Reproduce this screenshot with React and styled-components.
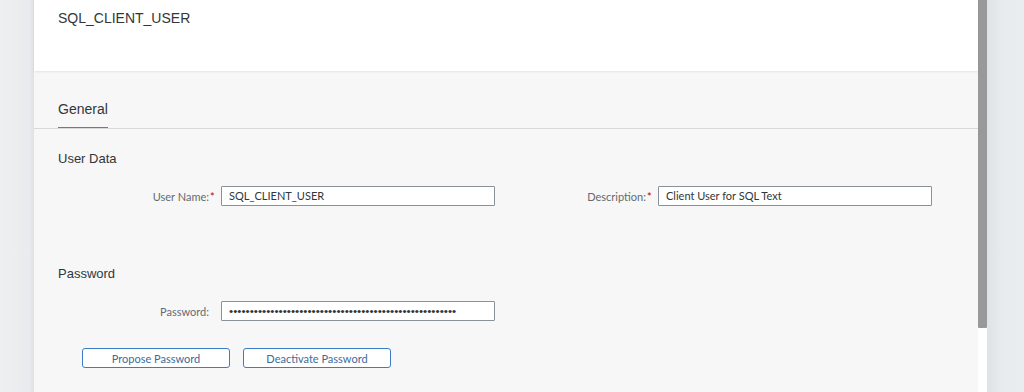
import styled, { createGlobalStyle } from 'styled-components';

const GlobalStyle = createGlobalStyle`
  html, body {
    margin: 0;
    padding: 0;
    background: #edeff0;
    font-family: 'Liberation Sans', Arial, sans-serif;
  }
`;

const Page = styled.div`
  display: flex;
  width: 1024px;
  height: 392px;
  overflow: hidden;
  background: #edeff0;
`;

const Gutter = styled.div`
  width: ${p => p.$width}px;
  flex-shrink: 0;
  background: ${p => p.$right
    ? 'linear-gradient(to right, #dfe3e5 0%, #e8ebed 40%, #eaedef 100%)'
    : 'linear-gradient(to right, #edeff0 0%, #e9ecee 85%, #dfe2e4 100%)'};
`;

const Panel = styled.div`
  width: 944px;
  flex-shrink: 0;
  display: flex;
  flex-direction: column;
  background: #f7f7f7;
`;

const Header = styled.header`
  height: 71px;
  box-sizing: border-box;
  padding: 9px 0 0 24px;
  background: #fff;
  box-shadow: 0 1px 2px rgba(0, 0, 0, 0.08);
  position: relative;
  z-index: 1;
`;

const Title = styled.h1`
  margin: 0;
  font-size: 14px;
  line-height: 18px;
  font-weight: 400;
  color: #32363a;
`;

const TabBar = styled.div`
  display: flex;
  padding: 28px 0 0 24px;
  border-bottom: 1px solid #d9d9d9;
`;

const Tab = styled.div`
  font-size: 14px;
  line-height: 20px;
  color: #32363a;
  padding-bottom: 8px;
  border-bottom: 1px solid #3e86d4;
`;

const Content = styled.div`
  display: flex;
  flex-direction: column;
  padding: 21px 0 0 24px;
`;

const SectionTitle = styled.h2`
  margin: ${p => p.$top || 0}px 0 0;
  font-size: 13px;
  line-height: 18px;
  font-weight: 400;
  color: #32363a;
`;

const FormRow = styled.div`
  display: flex;
  margin-top: 18px;
`;

const Field = styled.div`
  display: flex;
  align-items: center;
  width: 437px;
`;

const Label = styled.label`
  width: 163px;
  box-sizing: border-box;
  padding-right: 5px;
  text-align: right;
  font-family: Lato, 'Liberation Sans', sans-serif;
  font-size: 11px;
  color: #666a6e;
  white-space: nowrap;
`;

const Required = styled.span`
  display: inline-block;
  width: 6px;
  margin-left: 1px;
  text-align: left;
  color: #bb0000;
  visibility: ${p => (p.$show ? 'visible' : 'hidden')};
`;

const Input = styled.div`
  width: 274px;
  height: 20px;
  box-sizing: border-box;
  border: 1px solid #89919a;
  border-radius: 1px;
  background: #fff;
  padding: 0 7px;
  font-family: ${p => (p.$dots ? "'Liberation Sans'" : 'Lato')}, sans-serif;
  font-size: ${p => (p.$dots ? '11.8px' : '11px')};
  line-height: 18px;
  color: #32363a;
  white-space: nowrap;
  overflow: hidden;
`;

const ButtonRow = styled.div`
  display: flex;
  gap: 13px;
  margin: 27px 0 0 48px;
`;

const Button = styled.button`
  width: 148px;
  height: 20px;
  padding: 0;
  border: 1px solid #3a7cc6;
  border-radius: 3px;
  background: #fff;
  font-family: Lato, 'Liberation Sans', sans-serif;
  font-size: 11px;
  color: #3d6a9b;
`;

const Scrollbar = styled.div`
  width: 9px;
  flex-shrink: 0;
  display: flex;
  flex-direction: column;
  background: #fff;
`;

const Thumb = styled.div`
  height: 328px;
  background: #999;
  border-radius: 0 0 1px 1px;
`;

function FormField({ label, value, required, dots }) {
  return (
    <Field>
      <Label>
        {label}
        <Required $show={required}>*</Required>
      </Label>
      <Input $dots={dots}>{value}</Input>
    </Field>
  );
}

export default function App() {
  return (
    <>
      <GlobalStyle />
      <Page>
        <Gutter $width={34} />
        <Panel>
          <Header>
            <Title>SQL_CLIENT_USER</Title>
          </Header>
          <TabBar>
            <Tab>General</Tab>
          </TabBar>
          <Content>
            <SectionTitle>User Data</SectionTitle>
            <FormRow>
              <FormField label="User Name:" value="SQL_CLIENT_USER" required />
              <FormField label="Description:" value="Client User for SQL Text" required />
            </FormRow>
            <SectionTitle $top={59}>Password</SectionTitle>
            <FormRow>
              <FormField label="Password:" value={'•'.repeat(55)} dots />
            </FormRow>
          </Content>
          <ButtonRow>
            <Button>Propose Password</Button>
            <Button>Deactivate Password</Button>
          </ButtonRow>
        </Panel>
        <Scrollbar>
          <Thumb />
        </Scrollbar>
        <Gutter $width={37} $right />
      </Page>
    </>
  );
}
